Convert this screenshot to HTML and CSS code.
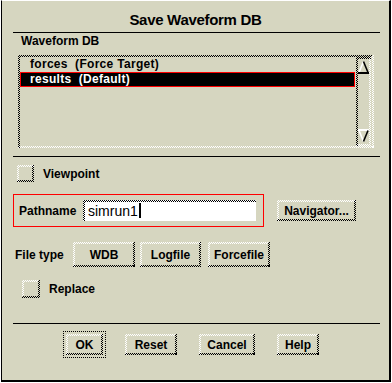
FILE: index.html
```html
<!DOCTYPE html>
<html lang="en">
<head>
  <meta charset="UTF-8" />
  <title>Save Waveform DB</title>
  <link rel="stylesheet" href="styles.css">
</head>
<body>

  <div class="dialog">
    <div class="title">Save Waveform DB</div>
    <div class="sep"></div>

    <div class="group-label">Waveform DB</div>
    <div class="list sunken">
      <div class="rows">
        <div class="row">forces  (Force Target)</div>
        <div class="row selected">results  (Default)</div>
      </div>
      <div class="scrollbar sunken">
        <svg class="arrow" width="11" height="14" viewBox="0 0 11 14">
          <path d="M1 12.5 L5.5 1.5" stroke="#fff" stroke-width="1.6" fill="none" />
          <path d="M5.5 1.5 L10 12.5" stroke="#000" stroke-width="1.6" fill="none" />
          <path d="M0 13 H11" stroke="#000" stroke-width="2" />
        </svg>
        <svg class="arrow" width="11" height="14" viewBox="0 0 11 14">
          <path d="M0 1 H11" stroke="#fff" stroke-width="2" />
          <path d="M1 1.5 L5.5 12.5" stroke="#fff" stroke-width="1.6" fill="none" />
          <path d="M5.5 12.5 L10 1.5" stroke="#000" stroke-width="1.6" fill="none" />
        </svg>
      </div>
    </div>

    <div class="sep sep-list"></div>

    <div class="check-row viewpoint">
      <span class="check raised"></span>
      <span class="check-label">Viewpoint</span>
    </div>

    <div class="path-row">
      <div class="path-frame">
        <span class="path-label">Pathname</span>
        <div class="field">simrun1<span class="caret"></span></div>
      </div>
      <div class="btn raised nav">Navigator...</div>
    </div>

    <div class="type-row">
      <span class="type-label">File type</span>
      <div class="btn raised wdb">WDB</div>
      <div class="btn raised logfile">Logfile</div>
      <div class="btn raised forcefile">Forcefile</div>
    </div>

    <div class="check-row replace">
      <span class="check raised"></span>
      <span class="check-label">Replace</span>
    </div>

    <div class="sep sep-actions"></div>

    <div class="actions">
      <div class="default-ring">
        <div class="btn raised ok">OK</div>
      </div>
      <div class="btn raised reset">Reset</div>
      <div class="btn raised cancel">Cancel</div>
      <div class="btn raised help">Help</div>
    </div>
  </div>

</body>
</html>
```

FILE: styles.css
```css
:root {
  --bg: #d6d6c0;
  --dk: conic-gradient(#000 0 25%, transparent 0 50%, #000 0 75%, transparent 0);
  --lt: conic-gradient(#fff 0 25%, transparent 0 50%, #fff 0 75%, transparent 0);
}

* {
  box-sizing: border-box;
}

body {
  margin: 0;
  background: #fff;
  color: #000;
  font-family: 'Liberation Sans', Arial, sans-serif;
  font-size: 12px;
  font-weight: bold;
}

.dialog {
  width: 390px;
  height: 382px;
  margin-left: 1px;
  background: var(--bg);
  border-top: 1px solid #fff;
  border-left: 1px solid #000;
  border-right: 2px solid #000;
  border-bottom: 2px solid #000;
}

/* checker bevels, like the old motif shadows */
.raised {
  border: 2px solid transparent;
  background:
    linear-gradient(var(--bg), var(--bg)) padding-box,
    var(--dk) left bottom / 2px 2px repeat-x border-box,
    var(--dk) right top / 2px 2px repeat-y border-box,
    var(--lt) left top / 2px 2px repeat-x border-box,
    var(--lt) left top / 2px 2px repeat-y border-box,
    var(--bg);
}

.sunken {
  border: 2px solid transparent;
  background:
    linear-gradient(var(--bg), var(--bg)) padding-box,
    var(--lt) left bottom / 2px 2px repeat-x border-box,
    var(--lt) right top / 2px 2px repeat-y border-box,
    var(--dk) left top / 2px 2px repeat-x border-box,
    var(--dk) left top / 2px 2px repeat-y border-box,
    var(--bg);
}

.title {
  height: 31px;
  padding-top: 6px;
  line-height: 25px;
  text-align: center;
  font-size: 15px;
  font-weight: bold;
  letter-spacing: -0.3px;
}

.sep {
  height: 1px;
  margin: 0 9px 0 11px;
  background: #000;
}

.group-label {
  margin: 1px 0 0 19px;
  line-height: 14px;
}

.list {
  display: flex;
  width: 356px;
  height: 93px;
  margin: 7px 0 0 16px;
  padding-right: 1px;
}

.rows {
  width: 335px;
  margin-right: 1px;
}

.row {
  height: 15px;
  padding-left: 9px;
  line-height: 13px;
  border: 1px solid transparent;
  white-space: pre;
  letter-spacing: 0.3px;
}

.row.selected {
  background: #000;
  color: #fff;
  border-color: #f00;
}

.scrollbar {
  width: 15px;
  display: flex;
  flex-direction: column;
  justify-content: space-between;
  align-items: center;
  padding: 1px 0;
}

.arrow {
  display: block;
}

.sep-list {
  margin-top: 8px;
}

.check-row {
  display: flex;
  align-items: center;
  gap: 9px;
}

.viewpoint {
  margin: 8px 0 0 15px;
}

.viewpoint .check {
  width: 17px;
  height: 17px;
}

.replace {
  margin: 13px 0 0 20px;
}

.replace .check {
  width: 18px;
  height: 18px;
}

.path-row {
  display: flex;
  align-items: center;
  margin: 12px 0 0 11px;
}

.path-frame {
  display: flex;
  align-items: center;
  justify-content: space-between;
  width: 251px;
  height: 33px;
  padding: 0 7px 0 5px;
  border: 1px solid #f00;
}

.field {
  display: flex;
  align-items: center;
  width: 173px;
  height: 21px;
  padding-left: 3px;
  border: 2px solid transparent;
  background:
    linear-gradient(#fff, #fff) padding-box,
    var(--lt) left bottom / 2px 2px repeat-x border-box,
    var(--lt) right top / 2px 2px repeat-y border-box,
    var(--dk) left top / 2px 2px repeat-x border-box,
    var(--dk) left top / 2px 2px repeat-y border-box,
    #fff;
  font-size: 14px;
  font-weight: normal;
}

.caret {
  width: 2px;
  height: 15px;
  margin-left: 1px;
  background: #000;
}

.btn {
  display: flex;
  align-items: center;
  justify-content: center;
  height: 21px;
}

.nav {
  width: 79px;
  height: 21px;
  margin-left: 13px;
}

.type-row {
  display: flex;
  align-items: center;
  margin: 15px 0 0 13px;
}

.type-row .btn {
  height: 25px;
}

.type-label {
  width: 58px;
}

.wdb {
  width: 62px;
}

.logfile {
  width: 61px;
  margin-left: 5px;
}

.forcefile {
  width: 62px;
  margin-left: 7px;
}

.sep-actions {
  margin-top: 25px;
}

.actions {
  display: flex;
  align-items: center;
  gap: 22px;
  margin: 7px 0 0 61px;
}

.default-ring {
  padding: 2px;
  border: 1px dotted #000;
  margin-right: -3px;
}

.ok {
  width: 37px;
}

.reset {
  width: 52px;
}

.cancel {
  width: 56px;
}

.help {
  width: 42px;
}
```
